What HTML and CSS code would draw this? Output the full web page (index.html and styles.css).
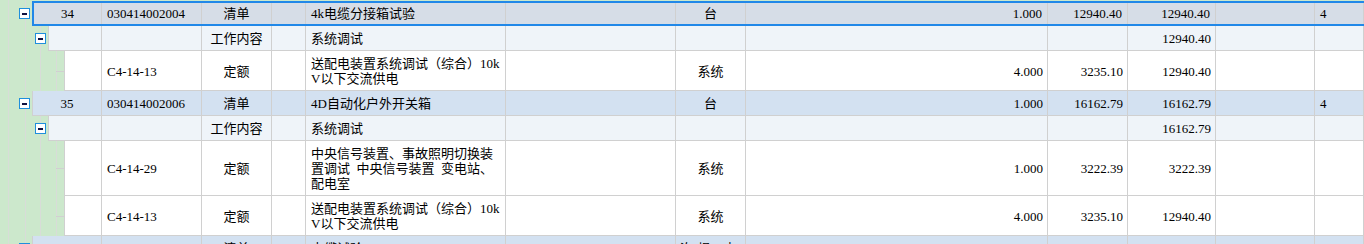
FILE: index.html
```html
<!DOCTYPE html>
<html lang="zh-CN">
<head>
<meta charset="utf-8">
<title>清单</title>
<link rel="stylesheet" href="styles.css">
</head>
<body>
<div class="grid">
  <div class="row l1 sel">
    <div class="gutter"><span class="tog"></span></div>
    <div class="line">
      <div class="c ctr">34</div>
      <div class="c">030414002004</div>
      <div class="c ctr">清单</div>
      <div class="c"></div>
      <div class="c"><span>4k电缆分接箱试验</span></div>
      <div class="c"></div>
      <div class="c ctr">台</div>
      <div class="c rt">1.000</div>
      <div class="c rt">12940.40</div>
      <div class="c rt">12940.40</div>
      <div class="c"></div>
      <div class="c">4</div>
    </div>
  </div>
  <div class="row l2">
    <div class="gutter"><span class="tog"></span></div>
    <div class="line">
      <div class="c"></div>
      <div class="c"></div>
      <div class="c ctr">工作内容</div>
      <div class="c"></div>
      <div class="c"><span>系统调试</span></div>
      <div class="c"></div>
      <div class="c"></div>
      <div class="c"></div>
      <div class="c"></div>
      <div class="c rt">12940.40</div>
      <div class="c"></div>
      <div class="c"></div>
    </div>
  </div>
  <div class="row l3">
    <div class="gutter"><span class="stub"></span></div>
    <div class="line">
      <div class="c"></div>
      <div class="c">C4-14-13</div>
      <div class="c ctr">定额</div>
      <div class="c"></div>
      <div class="c"><span>送配电装置系统调试（综合）10k<br>V以下交流供电</span></div>
      <div class="c"></div>
      <div class="c ctr">系统</div>
      <div class="c rt">4.000</div>
      <div class="c rt">3235.10</div>
      <div class="c rt">12940.40</div>
      <div class="c"></div>
      <div class="c"></div>
    </div>
  </div>
  <div class="row l1">
    <div class="gutter"><span class="tog"></span></div>
    <div class="line">
      <div class="c ctr">35</div>
      <div class="c">030414002006</div>
      <div class="c ctr">清单</div>
      <div class="c"></div>
      <div class="c"><span>4D自动化户外开关箱</span></div>
      <div class="c"></div>
      <div class="c ctr">台</div>
      <div class="c rt">1.000</div>
      <div class="c rt">16162.79</div>
      <div class="c rt">16162.79</div>
      <div class="c"></div>
      <div class="c">4</div>
    </div>
  </div>
  <div class="row l2">
    <div class="gutter"><span class="tog"></span></div>
    <div class="line">
      <div class="c"></div>
      <div class="c"></div>
      <div class="c ctr">工作内容</div>
      <div class="c"></div>
      <div class="c"><span>系统调试</span></div>
      <div class="c"></div>
      <div class="c"></div>
      <div class="c"></div>
      <div class="c"></div>
      <div class="c rt">16162.79</div>
      <div class="c"></div>
      <div class="c"></div>
    </div>
  </div>
  <div class="row l3">
    <div class="gutter"><span class="stub"></span></div>
    <div class="line">
      <div class="c"></div>
      <div class="c">C4-14-29</div>
      <div class="c ctr">定额</div>
      <div class="c"></div>
      <div class="c"><span>中央信号装置、事故照明切换装<br>置调试&ensp;中央信号装置&ensp;变电站、<br>配电室</span></div>
      <div class="c"></div>
      <div class="c ctr">系统</div>
      <div class="c rt">1.000</div>
      <div class="c rt">3222.39</div>
      <div class="c rt">3222.39</div>
      <div class="c"></div>
      <div class="c"></div>
    </div>
  </div>
  <div class="row l3">
    <div class="gutter"><span class="stub"></span></div>
    <div class="line">
      <div class="c"></div>
      <div class="c">C4-14-13</div>
      <div class="c ctr">定额</div>
      <div class="c"></div>
      <div class="c"><span>送配电装置系统调试（综合）10k<br>V以下交流供电</span></div>
      <div class="c"></div>
      <div class="c ctr">系统</div>
      <div class="c rt">4.000</div>
      <div class="c rt">3235.10</div>
      <div class="c rt">12940.40</div>
      <div class="c"></div>
      <div class="c"></div>
    </div>
  </div>
  <div class="row l1 partial">
    <div class="gutter"><span class="tog"></span></div>
    <div class="line">
      <div class="c"></div>
      <div class="c"></div>
      <div class="c ctr">清单</div>
      <div class="c"></div>
      <div class="c"><span>电缆试验</span></div>
      <div class="c"></div>
      <div class="c ctr">次(根、点)</div>
      <div class="c"></div>
      <div class="c"></div>
      <div class="c"></div>
      <div class="c"></div>
      <div class="c"></div>
    </div>
  </div>
</div>
</body>
</html>
```

FILE: styles.css
```css
* {
  box-sizing: border-box;
  margin: 0;
  padding: 0;
}

html,
body {
  width: 1364px;
  height: 244px;
  overflow: hidden;
  background: #fff;
}

body {
  font-family: "Liberation Serif", "Noto Sans CJK SC", serif;
  font-size: 13px;
  line-height: 15px;
  color: #000;
}

.grid {
  height: 244px;
  overflow: hidden;
  padding-top: 1px;
  background:
    linear-gradient(#d8dcd8, #d8dcd8) 8px 0 / 1px 100% no-repeat,
    linear-gradient(#d8dcd8, #d8dcd8) 25px 0 / 1px 100% no-repeat,
    linear-gradient(#d8dcd8, #d8dcd8) 40px 0 / 1px 100% no-repeat,
    linear-gradient(#d8dcd8, #d8dcd8) 56px 0 / 1px 100% no-repeat,
    #cce8cc;
}

.row {
  display: flex;
}

.gutter {
  flex: none;
  display: flex;
  align-items: center;
  justify-content: flex-end;
  padding-right: 2px;
}

.l1 .gutter { width: 32px; }
.l2 .gutter { width: 48px; }
.l3 .gutter { width: 64px; padding-right: 0; }

.tog {
  width: 11px;
  height: 11px;
  border: 1px solid #1f8fdc;
  background: #fff;
  display: flex;
  align-items: center;
  justify-content: center;
}

.tog::before {
  content: "";
  width: 5px;
  height: 2px;
  background: #101040;
}

.stub {
  width: 8px;
  height: 1px;
  background: #d0d0d0;
}

.line {
  flex: 1;
  display: grid;
  grid-template-columns: var(--first) 100px 70px 34px 200px 170px 70px 302px 80px 88px 99px 1fr;
  border-left: 1px solid #d0d0d0;
  border-bottom: 1px solid #d0d0d0;
}

.l1 .line { --first: 69px; background: #d3e1f1; }
.l2 .line { --first: 53px; background: #eff4f9; }
.l3 .line { --first: 37px; background: #fff; }

.l1.sel .line {
  --first: 68px;
  background: #d6dde7;
  border: 2px solid #2188e8;
  border-right: 0;
}

.c {
  display: flex;
  align-items: center;
  padding: 5px 5px 4px;
  border-right: 1px solid #d0d0d0;
  white-space: nowrap;
  overflow: hidden;
}

.sel .c {
  padding: 3px 5px;
}

.ctr { justify-content: center; }

.rt {
  justify-content: flex-end;
  padding-right: 4px;
}
```
